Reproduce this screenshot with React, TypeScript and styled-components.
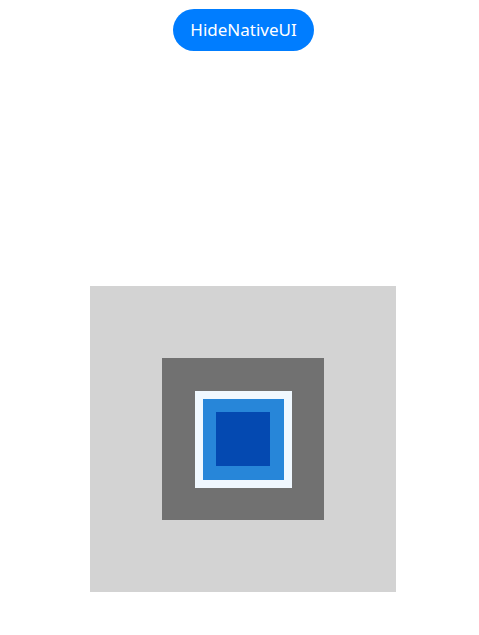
import React from "react";
import styled, { createGlobalStyle } from "styled-components";

const GlobalStyle = createGlobalStyle`
  html, body {
    margin: 0;
    padding: 0;
    background: #ffffff;
  }
  body {
    font-family: "Noto Sans", "Liberation Sans", sans-serif;
  }
`;

const Page = styled.div`
  box-sizing: border-box;
  width: 100%;
  min-height: 635px;
  padding-left: 7px;
  padding-top: 9px;
  display: flex;
  flex-direction: column;
  align-items: center;
`;

const PillButton = styled.button`
  height: 42px;
  padding: 0 17px;
  margin-left: 1px;
  border: none;
  border-radius: 21px;
  background: #007dff;
  color: #ffffff;
  font-family: "Noto Sans", "Liberation Sans", sans-serif;
  font-size: 17px;
  line-height: 42px;
  cursor: pointer;
`;

const Square = styled.div<{ $size: number; $color: string; $top?: number }>`
  width: ${(p) => p.$size}px;
  height: ${(p) => p.$size}px;
  margin-top: ${(p) => p.$top ?? 0}px;
  background: ${(p) => p.$color};
  display: flex;
  align-items: center;
  justify-content: center;
  flex-shrink: 0;
`;

const App: React.FC = () => {
  return (
    <>
      <GlobalStyle />
      <Page>
        <PillButton>HideNativeUI</PillButton>
        <Square $size={306} $color="#d3d3d3" $top={235}>
          <Square $size={162} $color="#717171">
            <Square $size={97} $color="#f0f8ff">
              <Square $size={81} $color="#2786d9">
                <Square $size={54} $color="#0449b1" />
              </Square>
            </Square>
          </Square>
        </Square>
      </Page>
    </>
  );
};

export default App;
